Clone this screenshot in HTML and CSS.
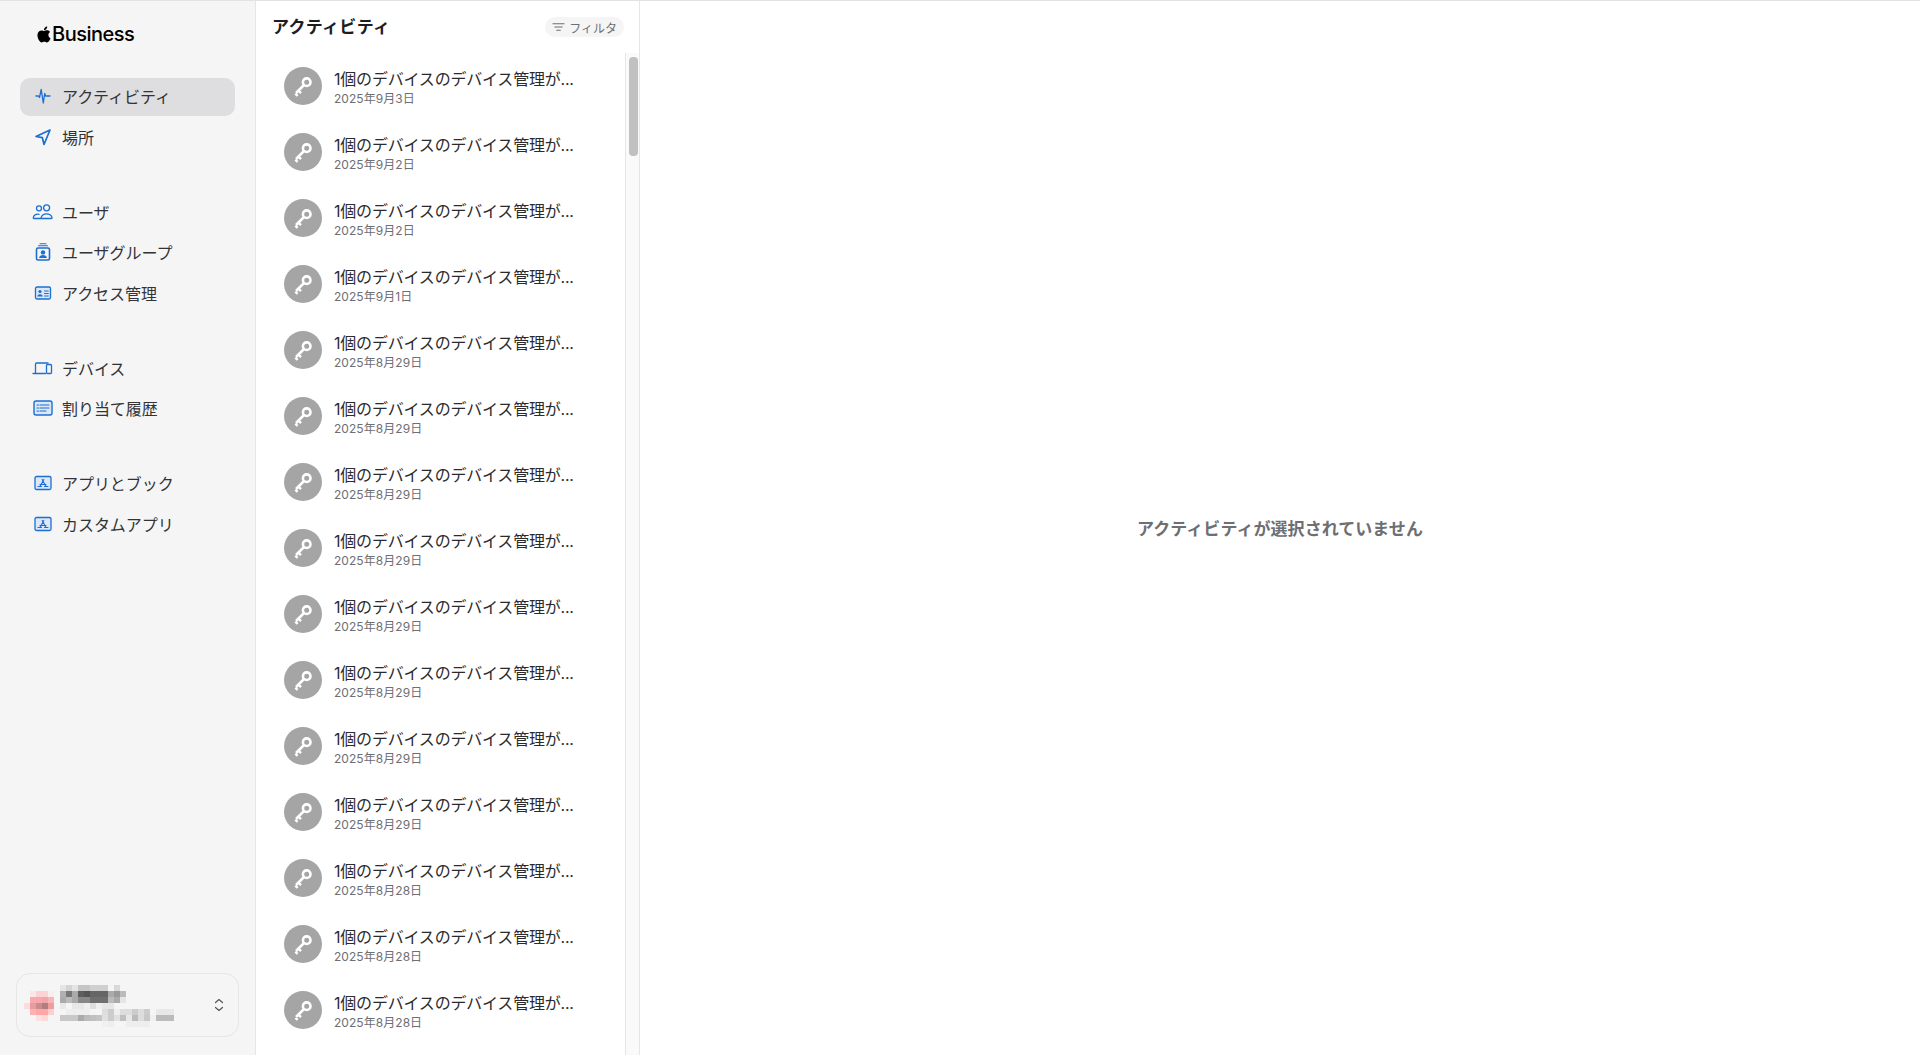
FILE: index.html
```html
<!DOCTYPE html>
<html lang="ja">
<head>
<meta charset="utf-8">
<title>Apple Business</title>
<link rel="stylesheet" href="styles.css">
</head>
<body>
<svg class="defs" width="0" height="0" aria-hidden="true">
  <symbol id="key" viewBox="0 0 38 38">
    <g fill="none" stroke="#fff">
      <circle cx="22.7" cy="15.2" r="3.8" stroke-width="2.6"/>
      <path d="M20 18 L12 26 M14.4 23.6 L17 26.2 M11.4 26.6 L13.6 28.8" stroke-width="2.5"/>
    </g>
  </symbol>
</svg>
<div class="app">
  <aside class="sidebar">
    <div class="brand">
      <svg class="apple" viewBox="0 0 24 24"><path fill="#000" d="M12.152 6.896c-.948 0-2.415-1.078-3.96-1.04-2.04.027-3.91 1.183-4.961 3.014-2.117 3.675-.546 9.103 1.519 12.09 1.013 1.454 2.208 3.09 3.792 3.039 1.52-.065 2.09-.987 3.935-.987 1.831 0 2.35.987 3.96.948 1.637-.026 2.676-1.48 3.676-2.948 1.156-1.688 1.636-3.325 1.662-3.415-.039-.013-3.182-1.221-3.22-4.857-.026-3.04 2.48-4.494 2.597-4.559-1.429-2.09-3.623-2.324-4.39-2.376-2-.156-3.675 1.09-4.61 1.09zM15.53 3.83c.843-1.012 1.4-2.427 1.245-3.83-1.207.052-2.662.805-3.532 1.818-.78.896-1.454 2.338-1.273 3.714 1.338.104 2.715-.688 3.559-1.701"/></svg>
      <span class="brand-name">Business</span>
    </div>
    <nav class="nav">
      <div class="nav-group">
        <a class="nav-item active">
          <svg class="nav-icon" viewBox="0 0 24 24"><path d="M5 12h2.500l1 1.500L10.200 5.500 12.300 19l1.400-9.500.9 2.500H19"/></svg>
          <span>アクティビティ</span>
        </a>
        <a class="nav-item">
          <svg class="nav-icon icon-bold" viewBox="0 0 24 24"><path d="M19 5 5 11.500l6.400 1.200 1.600 6.800z"/></svg>
          <span>場所</span>
        </a>
      </div>
      <div class="nav-group">
        <a class="nav-item">
          <svg class="nav-icon" viewBox="0 0 24 24"><circle cx="8" cy="8.300" r="2.500"/><circle cx="15.600" cy="7.800" r="3"/><path d="M9.800 18.500H3c-.6 0-.9-.4-.7-1 .6-2 2.800-3.600 5.700-3.200M11 18.500c-.7 0-1-.4-.8-1.100.7-2.200 2.800-3.600 5.400-3.600s4.700 1.400 5.400 3.600c.2.700-.1 1.100-.8 1.100z"/></svg>
          <span>ユーザ</span>
        </a>
        <a class="nav-item">
          <svg class="nav-icon" viewBox="0 0 24 24"><rect x="5.500" y="8" width="13" height="12" rx="1.500" stroke-width="1.600"/><path d="M7.500 5.800h9M9 3.800h6" stroke-width="1.100"/><circle class="solid" cx="12" cy="12.400" r="2.200"/><path class="solid" d="M8 18c.3-2 2-3 4-3s3.700 1 4 3z"/></svg>
          <span>ユーザグループ</span>
        </a>
        <a class="nav-item">
          <svg class="nav-icon" viewBox="0 0 24 24"><rect x="4.500" y="6" width="15" height="12" rx="1.500" fill="#dbe7f6"/><circle class="solid" cx="9" cy="10.500" r="1.600"/><path class="solid" d="M6.300 15.500c.2-1.500 1.300-2.300 2.700-2.300s2.500.8 2.700 2.300z"/><path d="M13.500 10h3.800M13.500 12.500h3.800M13.500 15h3.800" stroke-width="1"/></svg>
          <span>アクセス管理</span>
        </a>
      </div>
      <div class="nav-group">
        <a class="nav-item">
          <svg class="nav-icon" viewBox="0 0 24 24"><path d="M4.500 17V8c0-.7.400-1 1-1h11.500"/><path d="M2 17.500h12.500" stroke-width="1.300"/><rect x="15.500" y="8.500" width="5" height="9" rx="1"/></svg>
          <span>デバイス</span>
        </a>
        <a class="nav-item">
          <svg class="nav-icon" viewBox="0 0 24 24"><rect x="3" y="5" width="18" height="14" rx="2" stroke-width="1.400" fill="#dbe7f6"/><path d="M6 9h1.500M9 9h9M6 12h1.500M9 12h9M6 15h1.500M9 15h6" stroke-width="1.200"/></svg>
          <span>割り当て履歴</span>
        </a>
      </div>
      <div class="nav-group">
        <a class="nav-item">
          <svg class="nav-icon" viewBox="0 0 24 24"><rect x="4" y="5.500" width="16" height="13" rx="1.500" fill="#dbe7f6"/><path d="M12.800 8.500 9 15.500M11.200 8.500l3.800 7M7 15.500h3.500M13.500 15.500H17M9 13.500h6" stroke-width="1.100"/></svg>
          <span>アプリとブック</span>
        </a>
        <a class="nav-item">
          <svg class="nav-icon" viewBox="0 0 24 24"><rect x="4" y="5.500" width="16" height="13" rx="1.500" fill="#dbe7f6"/><path d="M12.800 8.500 9 15.500M11.200 8.500l3.800 7M7 15.500h3.500M13.500 15.500H17M9 13.500h6" stroke-width="1.100"/></svg>
          <span>カスタムアプリ</span>
        </a>
      </div>
    </nav>
    <div class="account">
      <svg class="mosaic" width="156" height="42" viewBox="0 0 156 42" shape-rendering="crispEdges">
        <g>
          <rect x="6" y="6" width="6" height="6" fill="#f8e8e8"/><rect x="12" y="6" width="12" height="6" fill="#fcd2d2"/><rect x="24" y="6" width="6" height="6" fill="#f7eeee"/>
          <rect x="6" y="12" width="6" height="6" fill="#f7a9af"/><rect x="12" y="12" width="6" height="6" fill="#f5a8ad"/><rect x="18" y="12" width="6" height="6" fill="#f0a5a8"/><rect x="24" y="12" width="6" height="6" fill="#f7b5b5"/>
          <rect x="0" y="18" width="6" height="6" fill="#fbdcdc"/><rect x="6" y="18" width="6" height="6" fill="#e99ca0"/><rect x="12" y="18" width="6" height="6" fill="#c98d90"/><rect x="18" y="18" width="6" height="6" fill="#b07d80"/><rect x="24" y="18" width="6" height="6" fill="#ef9c9c"/>
          <rect x="6" y="24" width="6" height="6" fill="#ffb0b0"/><rect x="12" y="24" width="12" height="6" fill="#ffa6a6"/><rect x="24" y="24" width="6" height="6" fill="#fcd0d0"/>
          <rect x="12" y="30" width="6" height="6" fill="#fde0e0"/><rect x="18" y="30" width="6" height="6" fill="#fcd8d8"/>
        </g>
        <g>
          <rect x="36" y="0" width="6" height="6" fill="#e4e4e4"/><rect x="42" y="0" width="6" height="6" fill="#d5d5d5"/><rect x="48" y="0" width="6" height="6" fill="#e4e4e4"/><rect x="54" y="0" width="12" height="6" fill="#c5c5c5"/><rect x="66" y="0" width="18" height="6" fill="#d0d0d0"/><rect x="90" y="0" width="6" height="6" fill="#d8d8d8"/>
          <rect x="36" y="6" width="6" height="6" fill="#b0b0b0"/><rect x="42" y="6" width="6" height="6" fill="#777"/><rect x="48" y="6" width="6" height="6" fill="#aaa"/><rect x="54" y="6" width="6" height="6" fill="#5e5e5e"/><rect x="60" y="6" width="6" height="6" fill="#555"/><rect x="66" y="6" width="18" height="6" fill="#666"/><rect x="84" y="6" width="6" height="6" fill="#aaa"/><rect x="90" y="6" width="6" height="6" fill="#999"/><rect x="96" y="6" width="6" height="6" fill="#bbb"/>
          <rect x="36" y="12" width="6" height="6" fill="#aaa"/><rect x="42" y="12" width="6" height="6" fill="#bbb"/><rect x="48" y="12" width="6" height="6" fill="#aaa"/><rect x="54" y="12" width="12" height="6" fill="#888"/><rect x="66" y="12" width="18" height="6" fill="#6f6f6f"/><rect x="84" y="12" width="6" height="6" fill="#bbb"/><rect x="90" y="12" width="6" height="6" fill="#aaa"/><rect x="96" y="12" width="6" height="6" fill="#e5e5e5"/>
          <rect x="36" y="18" width="6" height="6" fill="#e8e8e8"/><rect x="48" y="18" width="12" height="6" fill="#e8e8e8"/><rect x="60" y="18" width="6" height="6" fill="#f0f0f0"/><rect x="66" y="18" width="6" height="6" fill="#ddd"/><rect x="72" y="18" width="6" height="6" fill="#eee"/><rect x="78" y="18" width="12" height="6" fill="#e6e6e6"/>
        </g>
        <g>
          <rect x="42" y="24" width="24" height="6" fill="#eee"/><rect x="78" y="24" width="6" height="6" fill="#ddd"/><rect x="84" y="24" width="6" height="6" fill="#ccc"/><rect x="90" y="24" width="6" height="6" fill="#eee"/><rect x="96" y="24" width="12" height="6" fill="#ddd"/><rect x="108" y="24" width="6" height="6" fill="#ccc"/><rect x="114" y="24" width="6" height="6" fill="#ddd"/><rect x="120" y="24" width="6" height="6" fill="#ccc"/><rect x="132" y="24" width="18" height="6" fill="#e8e8e8"/>
          <rect x="36" y="30" width="18" height="6" fill="#c8c8c8"/><rect x="54" y="30" width="6" height="6" fill="#aaa"/><rect x="60" y="30" width="6" height="6" fill="#bbb"/><rect x="66" y="30" width="6" height="6" fill="#c0c0c0"/><rect x="72" y="30" width="6" height="6" fill="#c5c5c5"/><rect x="78" y="30" width="6" height="6" fill="#e0e0e0"/><rect x="84" y="30" width="6" height="6" fill="#ccc"/><rect x="90" y="30" width="6" height="6" fill="#e0e0e0"/><rect x="96" y="30" width="6" height="6" fill="#c0c0c0"/><rect x="102" y="30" width="6" height="6" fill="#e8e8e8"/><rect x="108" y="30" width="6" height="6" fill="#bbb"/><rect x="114" y="30" width="6" height="6" fill="#ddd"/><rect x="120" y="30" width="6" height="6" fill="#c8c8c8"/><rect x="126" y="30" width="6" height="6" fill="#f0f0f0"/><rect x="132" y="30" width="18" height="6" fill="#bbb"/>
          <rect x="78" y="36" width="6" height="6" fill="#f0f0f0"/><rect x="84" y="36" width="6" height="6" fill="#eee"/><rect x="102" y="36" width="24" height="6" fill="#eee"/>
        </g>
      </svg>
      <svg class="updown" viewBox="0 0 10 14"><path d="M1.500 4.500 5 1.500l3.500 3M1.500 9.500 5 12.500l3.500-3"/></svg>
    </div>
  </aside>
  <section class="list-pane">
    <header class="list-head">
      <h1 class="list-title">アクティビティ</h1>
      <button class="filter">
        <svg class="filter-icon" viewBox="0 0 14 10"><path d="M1 1.500h12M3 5h8M5 8.500h4"/></svg>
        <span>フィルタ</span>
      </button>
    </header>
    <div class="list-body">
      <ul class="rows">
        <li class="row"><svg class="avatar"><use href="#key"/></svg><div class="row-text"><p class="row-title">1個のデバイスのデバイス管理が...</p><p class="row-date">2025年9月3日</p></div></li>
        <li class="row"><svg class="avatar"><use href="#key"/></svg><div class="row-text"><p class="row-title">1個のデバイスのデバイス管理が...</p><p class="row-date">2025年9月2日</p></div></li>
        <li class="row"><svg class="avatar"><use href="#key"/></svg><div class="row-text"><p class="row-title">1個のデバイスのデバイス管理が...</p><p class="row-date">2025年9月2日</p></div></li>
        <li class="row"><svg class="avatar"><use href="#key"/></svg><div class="row-text"><p class="row-title">1個のデバイスのデバイス管理が...</p><p class="row-date">2025年9月1日</p></div></li>
        <li class="row"><svg class="avatar"><use href="#key"/></svg><div class="row-text"><p class="row-title">1個のデバイスのデバイス管理が...</p><p class="row-date">2025年8月29日</p></div></li>
        <li class="row"><svg class="avatar"><use href="#key"/></svg><div class="row-text"><p class="row-title">1個のデバイスのデバイス管理が...</p><p class="row-date">2025年8月29日</p></div></li>
        <li class="row"><svg class="avatar"><use href="#key"/></svg><div class="row-text"><p class="row-title">1個のデバイスのデバイス管理が...</p><p class="row-date">2025年8月29日</p></div></li>
        <li class="row"><svg class="avatar"><use href="#key"/></svg><div class="row-text"><p class="row-title">1個のデバイスのデバイス管理が...</p><p class="row-date">2025年8月29日</p></div></li>
        <li class="row"><svg class="avatar"><use href="#key"/></svg><div class="row-text"><p class="row-title">1個のデバイスのデバイス管理が...</p><p class="row-date">2025年8月29日</p></div></li>
        <li class="row"><svg class="avatar"><use href="#key"/></svg><div class="row-text"><p class="row-title">1個のデバイスのデバイス管理が...</p><p class="row-date">2025年8月29日</p></div></li>
        <li class="row"><svg class="avatar"><use href="#key"/></svg><div class="row-text"><p class="row-title">1個のデバイスのデバイス管理が...</p><p class="row-date">2025年8月29日</p></div></li>
        <li class="row"><svg class="avatar"><use href="#key"/></svg><div class="row-text"><p class="row-title">1個のデバイスのデバイス管理が...</p><p class="row-date">2025年8月29日</p></div></li>
        <li class="row"><svg class="avatar"><use href="#key"/></svg><div class="row-text"><p class="row-title">1個のデバイスのデバイス管理が...</p><p class="row-date">2025年8月28日</p></div></li>
        <li class="row"><svg class="avatar"><use href="#key"/></svg><div class="row-text"><p class="row-title">1個のデバイスのデバイス管理が...</p><p class="row-date">2025年8月28日</p></div></li>
        <li class="row"><svg class="avatar"><use href="#key"/></svg><div class="row-text"><p class="row-title">1個のデバイスのデバイス管理が...</p><p class="row-date">2025年8月28日</p></div></li>
      </ul>
      <div class="track"><div class="thumb"></div></div>
    </div>
  </section>
  <main class="detail">
    <p class="empty">アクティビティが選択されていません</p>
  </main>
</div>
</body>
</html>
```
FILE: styles.css
```css
* { box-sizing: border-box; }
html, body { margin: 0; height: 100%; overflow: hidden; }
body {
  background: #fff;
  color: #1d1d1f;
  font-family: Inter, "Noto Sans CJK JP", sans-serif;
}
.defs { display: block; height: 0; }
.app {
  display: flex;
  height: 1055px;
  border-top: 1px solid #e2e2e2;
}
.sidebar {
  flex: 0 0 256px;
  display: flex;
  flex-direction: column;
  background: #f5f5f5;
  border-right: 1px solid #e6e6e6;
  padding: 0 20px 18px;
}
.brand {
  display: flex;
  align-items: center;
  height: 32px;
  margin: 17px 0 28px 16px;
  gap: 0;
}
.apple { width: 16px; height: 17px; }
.brand-name {
  font-size: 20px;
  font-weight: 500;
  letter-spacing: -0.5px;
  color: #000;
}
.nav { display: flex; flex-direction: column; gap: 37px; }
.nav-group { display: flex; flex-direction: column; gap: 2.5px; }
.nav-item {
  display: flex;
  align-items: center;
  gap: 7px;
  height: 38px;
  padding: 0 0 2px 11px;
  border-radius: 10px;
  font-size: 16px;
  letter-spacing: -0.05px;
  color: #333336;
}
.nav-item.active { background: #dedee0; }
.nav-icon {
  width: 24px;
  height: 24px;
  flex: none;
  fill: none;
  stroke: #1b6fd1;
  stroke-width: 1.3;
  stroke-linecap: round;
  stroke-linejoin: round;
}
.icon-bold { stroke-width: 1.7; }
.nav-icon .solid { fill: #1b6fd1; stroke: none; }
.account {
  margin: auto -4px 0;
  height: 64px;
  display: flex;
  align-items: center;
  justify-content: space-between;
  padding: 0 14px 0 7px;
  border: 1px solid #e6e6e6;
  border-radius: 14px;
}
.mosaic { flex: none; margin-top: 2px; }
.updown {
  width: 10px;
  height: 14px;
  fill: none;
  stroke: #555;
  stroke-width: 1.2;
  stroke-linecap: round;
  stroke-linejoin: round;
}
.list-pane {
  flex: 0 0 384px;
  display: flex;
  flex-direction: column;
  min-width: 0;
  border-right: 1px solid #e6e6e6;
  overflow: hidden;
}
.list-head {
  flex: 0 0 52px;
  display: flex;
  align-items: flex-start;
  justify-content: space-between;
  padding: 14px 15px 0 16px;
}
.list-title {
  margin: 0;
  font-size: 17px;
  line-height: 24px;
  font-weight: 600;
  letter-spacing: 0.3px;
  color: #1d1d1f;
}
.filter {
  display: flex;
  align-items: center;
  gap: 4px;
  height: 20px;
  margin-top: 2px;
  padding: 0 7px;
  border: 0;
  border-radius: 10px;
  background: #f5f5f5;
  color: #6e6e73;
  font: inherit;
  font-size: 12px;
}
.filter-icon {
  width: 13px;
  height: 10px;
  fill: none;
  stroke: #6e6e73;
  stroke-width: 1.1;
  stroke-linecap: round;
}
.list-body { flex: 1; display: flex; min-height: 0; }
.rows {
  flex: 1;
  margin: 0;
  padding: 0;
  list-style: none;
  overflow: hidden;
  min-width: 0;
}
.row {
  display: flex;
  align-items: center;
  gap: 12px;
  height: 66px;
  padding-left: 28px;
}
.avatar {
  width: 38px;
  height: 38px;
  flex: none;
  border-radius: 50%;
  background: #a5a5a5;
}
.row-text { padding-top: 3px; }
.row-title {
  margin: 0;
  font-size: 16px;
  line-height: 21px;
  letter-spacing: -0.2px;
  color: #2b2b2e;
}
.row-date {
  margin: 0;
  font-size: 12px;
  line-height: 17px;
  letter-spacing: 0.05px;
  color: #6e6e73;
}
.track {
  flex: 0 0 14px;
  background: #fafafa;
  border-left: 1px solid #e6e6e6;
  padding: 4px 1px 0 3px;
}
.thumb {
  height: 99px;
  border-radius: 4px;
  background: #c1c1c1;
}
.detail {
  flex: 1;
  display: flex;
  align-items: center;
  justify-content: center;
  padding-bottom: 2px;
}
.empty {
  margin: 0;
  font-size: 17px;
  font-weight: 600;
  letter-spacing: 0.05px;
  color: #6e6e73;
}
```
